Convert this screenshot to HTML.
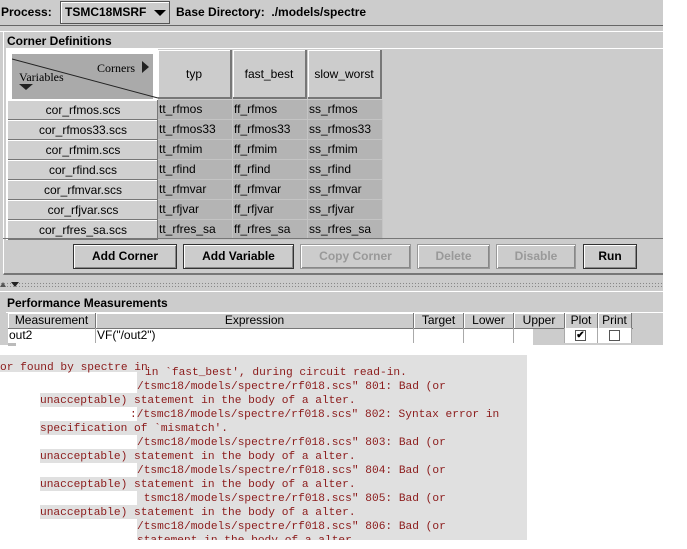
<!DOCTYPE html>
<html><head><style>
*{margin:0;padding:0;box-sizing:border-box}
body{width:687px;height:549px;background:#fff;position:relative;overflow:hidden;font-family:"Liberation Sans",sans-serif;font-size:12px;color:#000}
.a{position:absolute}
.b{font-weight:bold}
.btn{position:absolute;top:244px;height:25px;border:1px solid #333;box-shadow:inset 1px 1px 0 #fff,inset -1px -1px 0 #888;font-weight:bold;font-size:12px;text-align:center;line-height:23px;background:#ccc}
.dis{color:#999;border-color:#999}
.ch{position:absolute;top:50px;height:49px;width:74px;background:#ccc;border-right:2px solid #777;border-bottom:2px solid #777;box-shadow:inset 1px 1px 0 #fff;text-align:center;line-height:49px;font-size:12px}
.rh{position:absolute;left:8px;width:150px;height:20px;background:#d0d0d0;border-bottom:1px solid #777;box-shadow:inset 0 1px 0 #fff;text-align:center;line-height:20px;font-size:12px}
.dc{position:absolute;height:20px;width:75px;background:#b4b4b4;border-right:1px solid #c4c4c4;border-bottom:1px solid #c4c4c4;padding-left:1px;line-height:19px;font-size:12px}
.th{position:absolute;top:313px;height:15px;background:#ccc;border-right:1px solid #777;box-shadow:inset 1px 1px 0 #fff;text-align:center;font-size:12px;line-height:15px}
.td{position:absolute;top:328px;height:15px;border-right:1px solid #aaa;font-size:12px;line-height:15px;padding-left:1px}
.m{position:absolute;left:0;font-family:"Liberation Mono",monospace;font-size:11.2px;color:#8b1a1a;white-space:pre;line-height:14px}
</style></head><body>
<div class="a" style="left:0;top:0;width:663px;height:345px;background:#ccc"></div>
<div class="a" style="left:0;top:25px;width:663px;height:1px;background:#666"></div>
<div class="a" style="left:0;top:31px;width:663px;height:1px;background:#fff"></div>
<div class="a b" style="left:1px;top:5px">Process:</div>
<div class="a" style="left:60px;top:1px;width:110px;height:23px;border:1px solid #555;box-shadow:inset 1px 1px 0 #fff"></div>
<div class="a b" style="left:65px;top:5px">TSMC18MSRF</div>
<div class="a" style="left:154px;top:10px;width:0;height:0;border-left:6px solid transparent;border-right:6px solid transparent;border-top:6px solid #000"></div>
<div class="a b" style="left:176px;top:5px">Base Directory:&nbsp; ./models/spectre</div>
<div class="a" style="left:3px;top:32px;width:660px;height:243px;border-left:1px solid #fff;border-bottom:2px solid #777"></div>
<div class="a b" style="left:7px;top:34px">Corner Definitions</div>
<div class="a" style="left:6px;top:48px;width:657px;height:1px;background:#fff"></div>
<div class="a" style="left:6px;top:48px;width:2px;height:192px;background:#fff"></div>
<div class="a" style="left:8px;top:49px;width:150px;height:51px;background:#fff"></div>
<div class="a" style="left:12px;top:54px;width:141px;height:45px;background:#aaa"></div>
<svg class="a" style="left:12px;top:54px" width="146" height="46"><line x1="0" y1="5" x2="146" y2="44" stroke="#222" stroke-width="1"/><polygon points="130,7 137,13 130,19" fill="#222"/><polygon points="7,30 21,30 14,36" fill="#222"/></svg>
<div class="a" style="left:97px;top:61px;font-family:'Liberation Serif',serif;font-size:12px">Corners</div>
<div class="a" style="left:19px;top:70px;font-family:'Liberation Serif',serif;font-size:12px">Variables</div>
<div class="ch" style="left:158px">typ</div>
<div class="ch" style="left:233px">fast_best</div>
<div class="ch" style="left:308px">slow_worst</div>
<div class="rh" style="top:100px">cor_rfmos.scs</div>
<div class="rh" style="top:120px">cor_rfmos33.scs</div>
<div class="rh" style="top:140px">cor_rfmim.scs</div>
<div class="rh" style="top:160px">cor_rfind.scs</div>
<div class="rh" style="top:180px">cor_rfmvar.scs</div>
<div class="rh" style="top:200px">cor_rfjvar.scs</div>
<div class="rh" style="top:220px">cor_rfres_sa.scs</div>
<div class="a" style="left:157px;top:100px;width:1px;height:140px;background:#777"></div>
<div class="dc" style="left:158px;top:100px">tt_rfmos</div><div class="dc" style="left:233px;top:100px">ff_rfmos</div><div class="dc" style="left:308px;top:100px">ss_rfmos</div>
<div class="dc" style="left:158px;top:120px">tt_rfmos33</div><div class="dc" style="left:233px;top:120px">ff_rfmos33</div><div class="dc" style="left:308px;top:120px">ss_rfmos33</div>
<div class="dc" style="left:158px;top:140px">tt_rfmim</div><div class="dc" style="left:233px;top:140px">ff_rfmim</div><div class="dc" style="left:308px;top:140px">ss_rfmim</div>
<div class="dc" style="left:158px;top:160px">tt_rfind</div><div class="dc" style="left:233px;top:160px">ff_rfind</div><div class="dc" style="left:308px;top:160px">ss_rfind</div>
<div class="dc" style="left:158px;top:180px">tt_rfmvar</div><div class="dc" style="left:233px;top:180px">ff_rfmvar</div><div class="dc" style="left:308px;top:180px">ss_rfmvar</div>
<div class="dc" style="left:158px;top:200px">tt_rfjvar</div><div class="dc" style="left:233px;top:200px">ff_rfjvar</div><div class="dc" style="left:308px;top:200px">ss_rfjvar</div>
<div class="dc" style="left:158px;top:220px">tt_rfres_sa</div><div class="dc" style="left:233px;top:220px">ff_rfres_sa</div><div class="dc" style="left:308px;top:220px">ss_rfres_sa</div>
<div class="a" style="left:3px;top:238px;width:660px;height:1px;background:#777"></div>
<div class="btn" style="left:73px;width:104px">Add Corner</div>
<div class="btn" style="left:183px;width:111px">Add Variable</div>
<div class="btn dis" style="left:300px;width:111px">Copy Corner</div>
<div class="btn dis" style="left:417px;width:73px">Delete</div>
<div class="btn dis" style="left:496px;width:80px">Disable</div>
<div class="btn" style="left:583px;width:54px">Run</div>
<div class="a" style="left:0;top:282px;width:663px;height:5px;background-image:radial-gradient(#888 0.6px,transparent 0.8px);background-size:3px 3px"></div>
<svg class="a" style="left:0;top:281px" width="20" height="7"><polygon points="0,6 3,1 6,6" fill="#555"/><polygon points="11,1 19,1 15,6" fill="#222"/></svg>
<div class="a" style="left:0;top:291px;width:663px;height:1px;background:#fff"></div>
<div class="a b" style="left:7px;top:296px">Performance Measurements</div>
<div class="a" style="left:6px;top:312px;width:657px;height:1px;background:#fff"></div>
<div class="a" style="left:8px;top:328px;width:525px;height:17px;background:#fff"></div>
<div class="th" style="left:8px;width:88px">Measurement</div>
<div class="th" style="left:96px;width:318px">Expression</div>
<div class="th" style="left:414px;width:50px">Target</div>
<div class="th" style="left:464px;width:50px">Lower</div>
<div class="th" style="left:514px;width:51px">Upper</div>
<div class="th" style="left:565px;width:33px">Plot</div>
<div class="th" style="left:598px;width:34px">Print</div>
<div class="a" style="left:8px;top:328px;width:625px;height:1px;background:#777"></div>
<div class="td" style="left:8px;width:88px">out2</div>
<div class="td" style="left:96px;width:318px">VF("/out2")</div>
<div class="td" style="left:414px;width:50px"></div>
<div class="td" style="left:464px;width:50px"></div>
<div class="td" style="left:514px;width:51px"></div>
<div class="td" style="left:565px;width:33px;background:#fff"></div>
<div class="td" style="left:598px;width:34px;background:#fff"></div>
<div class="a" style="left:575px;top:330px;width:11px;height:11px;border:1px solid #555;font-size:10px;line-height:9px;text-align:center;font-weight:bold">✔</div>
<div class="a" style="left:609px;top:330px;width:11px;height:11px;border:1px solid #555"></div>
<div class="a" style="left:8px;top:343px;width:8px;height:3px;background:#bbb"></div>
<div class="a" style="left:0;top:355px;width:527px;height:185px;background:#e0e0e0"></div>
<div class="a" style="left:0;top:372px;width:137px;height:168px;background:#fff"></div>
<div class="a" style="left:0;top:358px;width:160px;height:14px;background:#e0e0e0"></div>
<div class="a" style="left:40px;top:393px;width:97px;height:14px;background:#e0e0e0"></div>
<div class="a" style="left:40px;top:421px;width:97px;height:14px;background:#e0e0e0"></div>
<div class="a" style="left:40px;top:449px;width:97px;height:14px;background:#e0e0e0"></div>
<div class="a" style="left:40px;top:477px;width:97px;height:14px;background:#e0e0e0"></div>
<div class="a" style="left:40px;top:505px;width:97px;height:14px;background:#e0e0e0"></div>
<div class="m" style="top:361px">or found by spectre in</div>
<div class="m" style="top:366px;left:145px">in `fast_best', during circuit read-in.</div>
<div class="m" style="top:380px;left:137px">/tsmc18/models/spectre/rf018.scs" 801: Bad (or</div>
<div class="m" style="top:394px;left:40px">unacceptable) statement in the body of a alter.</div>
<div class="m" style="top:408px;left:130px">:/tsmc18/models/spectre/rf018.scs" 802: Syntax error in</div>
<div class="m" style="top:422px;left:40px">specification of `mismatch'.</div>
<div class="m" style="top:436px;left:137px">/tsmc18/models/spectre/rf018.scs" 803: Bad (or</div>
<div class="m" style="top:450px;left:40px">unacceptable) statement in the body of a alter.</div>
<div class="m" style="top:464px;left:137px">/tsmc18/models/spectre/rf018.scs" 804: Bad (or</div>
<div class="m" style="top:478px;left:40px">unacceptable) statement in the body of a alter.</div>
<div class="m" style="top:492px;left:137px"> tsmc18/models/spectre/rf018.scs" 805: Bad (or</div>
<div class="m" style="top:506px;left:40px">unacceptable) statement in the body of a alter.</div>
<div class="m" style="top:520px;left:137px">/tsmc18/models/spectre/rf018.scs" 806: Bad (or</div>
<div class="m" style="top:534px;left:137px">statement in the body of a alter.</div>
<div class="a" style="left:0;top:540px;width:687px;height:9px;background:#fff"></div>
</body></html>
